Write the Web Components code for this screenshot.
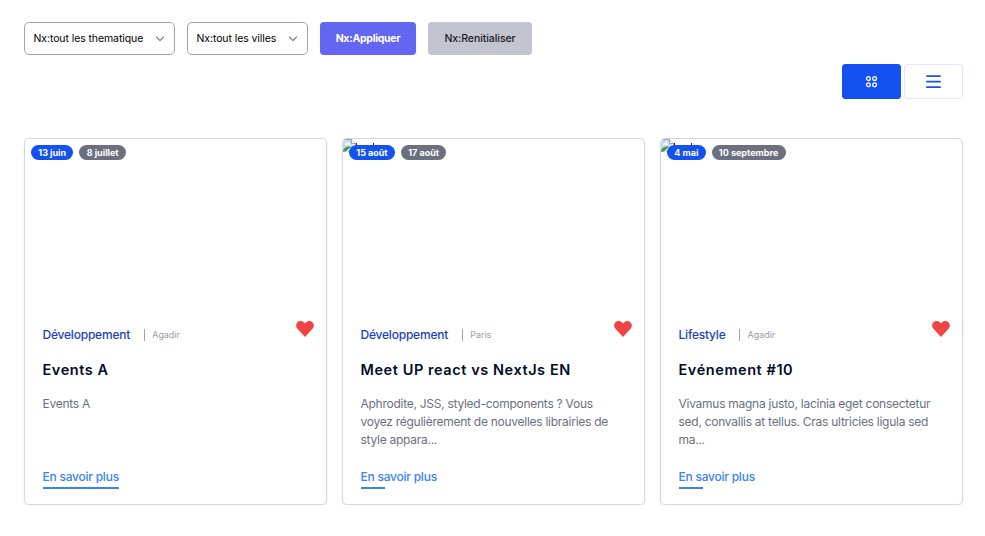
<!DOCTYPE html>
<html lang="fr"><head><meta charset="utf-8"><title>Evénements</title>
<style>body{margin:0;background:#fff;font-family:Inter,"Open Sans",sans-serif}</style></head>
<body><event-page></event-page>
<script>
const define=(name,html,init)=>{const t=document.createElement('template');t.innerHTML=html;
customElements.define(name,class extends HTMLElement{connectedCallback(){if(this.shadowRoot)return;const r=this.attachShadow({mode:'open'});r.append(t.content.cloneNode(true));if(init)init(this,r)}})};

define('filter-select',`<style>
:host{display:flex;box-sizing:border-box;height:33px;border:1px solid #a3a3b8;border-radius:5px;padding:0 9px 0 8.5px;align-items:center;justify-content:space-between;font-size:10.5px;letter-spacing:-.09px;color:#000;white-space:nowrap}
svg{display:block;margin-top:1px}</style><slot></slot>
<svg width="10" height="6" viewBox="0 0 10 6" fill="none" stroke="#77778e" stroke-width="1.1" stroke-linecap="round" stroke-linejoin="round"><path d="M1.5 1 5 4.6 8.5 1"/></svg>`);

define('filter-button',`<style>
:host{display:flex;height:33px;border-radius:4px;align-items:center;justify-content:center;background:#c2c4cf;color:#18181f;font-size:10.5px;font-weight:500;letter-spacing:-.06px;white-space:nowrap}
:host([primary]){background:#6366f1;color:#fff;font-weight:700;letter-spacing:-.28px}</style><slot></slot>`);

define('view-toggle',`<style>
:host{display:flex;justify-content:flex-end;gap:3px}
div{box-sizing:border-box;width:59px;height:35px;border:1px solid #e0e7ff;border-radius:3px;display:grid;place-items:center}
.on{background:#1352f1;border-color:#1352f1}svg{display:block}</style>
<div class="on"><svg width="13" height="13" viewBox="0 0 13 13" fill="none" stroke="#fff" stroke-width="1.3"><circle cx="3.4" cy="3.5" r="1.9"/><circle cx="9.6" cy="3.5" r="1.9"/><circle cx="3.4" cy="9.7" r="1.9"/><circle cx="9.6" cy="9.7" r="1.9"/></svg></div>
<div><svg width="15" height="15" viewBox="0 0 15 15" fill="none" stroke="#1d52e8" stroke-width="1.7" stroke-linecap="round"><path d="M.9 2.1h13.2M.9 7.7h13.2M.9 13.2h13.2"/></svg></div>`);

define('date-pill',`<style>
:host{display:block;height:15px;line-height:15px;border-radius:8px;padding:0 7.25px;background:#6b7080;color:#fff;font-size:9px;font-weight:700;white-space:nowrap}
:host([start]){background:#1352f1}</style><slot></slot>`);

define('missing-picture',`<style>:host{display:block}svg{display:block}</style>
<svg width="36" height="16" viewBox="0 0 36 16"><path d="M-.5.5h9l4 4v8h-13z" fill="#c8dcfa" stroke="#a0a2a6"/><path d="M8.5.5v4h4" fill="#fff" stroke="#a0a2a6"/><path d="M2 5.6c0-1.3 1-1.8 1.8-1.5.6-1.3 2.5-.8 2.6.6 1 0 1.2.9.8 1.4H2z" fill="#fff"/><path d="M0 12c1-5 6-5 10-4v4z" fill="#46a33c"/><path d="M3.5 13 12 5.5" stroke="#fff" stroke-width="1.6"/><path d="M13.5 4v3M30.5 4v3" stroke="#222"/><path d="M18 6.5h3M25 6.5h3" stroke="#aaa"/></svg>`);

define('event-card',`<style>
:host{display:flex;flex-direction:column;box-sizing:border-box;height:367px;border:1px solid #d5d6de;border-radius:5px;box-shadow:0 1px 2px rgba(0,0,0,.1);overflow:hidden}
.media{position:relative;height:172px}
.dates{position:absolute;top:6px;left:6px;display:flex;gap:6px}
.body{position:relative;padding:15px 17.5px 0;flex:1;display:flex;flex-direction:column;align-items:flex-start}
.heart{position:absolute;right:11px;top:9px;display:block}
.meta{display:flex;align-items:center;height:18px;line-height:18px}
.topic{font-size:12px;font-weight:500;letter-spacing:-.21px;color:#1d3fbb}
.rule{width:1px;height:12px;background:#9ca3af;margin:0 7.5px 0 13.6px}
.city{font-size:9px;color:#9a9ca9;letter-spacing:-.05px}
h2{margin:14px 0 0;font-size:14.5px;line-height:24px;height:24px;font-weight:600;letter-spacing:.57px;color:#030b2c;white-space:nowrap}
p{margin:13px 0 0;height:54px;font-size:12px;line-height:18px;letter-spacing:-.265px;color:#6b7080;white-space:pre}
.more{margin-top:19px;padding-bottom:3px;line-height:18px;font-size:12px;font-weight:500;letter-spacing:-.235px;color:#3b82f6;background:linear-gradient(#3b82f6,#3b82f6) left bottom/24px 2px no-repeat}
:host([active]) .more{background-size:100% 2px}
</style>
<div class="media"><slot name="picture"></slot><div class="dates"><slot name="date"></slot></div></div>
<div class="body"><svg class="heart" width="20" height="18" viewBox="0 0 20 18"><path fill="#ef4444" d="M2.45 2.35A4.55 4.55 0 0 1 8.9 2.35L10 3.45l1.1-1.1a4.55 4.55 0 0 1 6.45 6.5L10 17 2.45 8.85a4.55 4.55 0 0 1 0-6.5z"/></svg>
<div class="meta"><span class="topic"><slot name="topic"></slot></span><span class="rule"></span><span class="city"><slot name="city"></slot></span></div>
<h2><slot name="title"></slot></h2><p><slot name="text"></slot></p><span class="more">En savoir plus</span></div>`);

define('event-page',`<style>
:host{display:block;box-sizing:border-box;padding:22px 22px 0 24px}
.filters{display:flex;gap:12px}
.s1{width:151px}.s2{width:121px}.b1{width:96px}.b2{width:104px}
view-toggle{margin-top:9px}
.grid{display:grid;grid-template-columns:repeat(3,303px);gap:15px;margin-top:39px}
</style>
<div class="filters"><filter-select class="s1">Nx:tout les thematique</filter-select><filter-select class="s2">Nx:tout les villes</filter-select><filter-button class="b1" primary>Nx:Appliquer</filter-button><filter-button class="b2">Nx:Renitialiser</filter-button></div>
<view-toggle></view-toggle>
<div class="grid">
<event-card active><date-pill slot="date" start>13 juin</date-pill><date-pill slot="date">8 juillet</date-pill><span slot="topic">Développement</span><span slot="city">Agadir</span><span slot="title">Events A</span><span slot="text">Events A</span></event-card>
<event-card><missing-picture slot="picture"></missing-picture><date-pill slot="date" start>15 août</date-pill><date-pill slot="date">17 août</date-pill><span slot="topic">Développement</span><span slot="city">Paris</span><span slot="title">Meet UP react vs NextJs EN</span><span slot="text">Aphrodite, JSS, styled-components ? Vous
voyez régulièrement de nouvelles librairies de
style appara...</span></event-card>
<event-card><missing-picture slot="picture"></missing-picture><date-pill slot="date" start>4 mai</date-pill><date-pill slot="date">10 septembre</date-pill><span slot="topic">Lifestyle</span><span slot="city">Agadir</span><span slot="title">Evénement #10</span><span slot="text">Vivamus magna justo, lacinia eget consectetur
sed, convallis at tellus. Cras ultricies ligula sed
ma...</span></event-card>
</div>`);
</script></body></html>
